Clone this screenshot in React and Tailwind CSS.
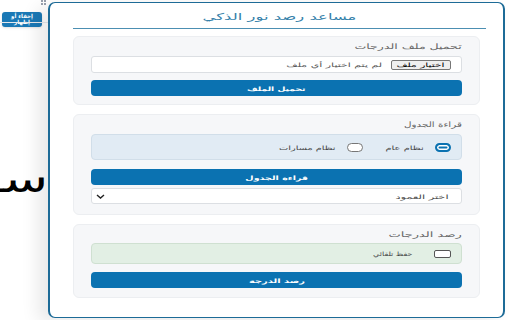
import React, { useLayoutEffect, useRef, useState } from "react";

const font = { fontFamily: '"DejaVu Sans", "Noto Sans", sans-serif' };

// the popup text is drawn wide; stretch each text so it fills its box
const Stretch = ({ className, children }) => {
  const boxRef = useRef(null);
  const textRef = useRef(null);
  const [scale, setScale] = useState(1);

  useLayoutEffect(() => {
    const box = boxRef.current.clientWidth;
    const text = textRef.current.offsetWidth;
    if (box && text) setScale(box / text);
  }, [children]);

  return (
    <span ref={boxRef} className={"inline-flex justify-center shrink-0 " + className}>
      <span
        ref={textRef}
        className="inline-block whitespace-nowrap"
        style={{ transform: `scaleX(${scale})` }}
      >
        {children}
      </span>
    </span>
  );
};

const Radio = ({ checked, onClick }) => (
  <span
    onClick={onClick}
    className={
      checked
        ? "w-[16px] h-[9px] shrink-0 rounded-full border-2 border-[#0b72b1] bg-[#0b72b1] shadow-[inset_0_0_0_1.5px_white] cursor-pointer"
        : "w-[16px] h-[9px] shrink-0 rounded-full border border-[#767676] bg-white cursor-pointer"
    }
  />
);

const App = () => {
  const [mode, setMode] = useState("general");
  const [autoSave, setAutoSave] = useState(false);

  return (
    <div className="relative w-[512px] h-[320px] bg-white overflow-hidden" style={font}>
      {/* page behind the popup */}
      <div className="pt-[7px] pl-[2px]">
        <button className="w-[40px] h-[15px] rounded-[3px] bg-[#1a78b5] text-white text-[5.5px] leading-[6.5px] font-bold shadow-sm">
          إخفاء أو
          <br />
          إظهار
        </button>
      </div>
      <div className="absolute left-[41px] top-0 grid grid-cols-2 gap-[1px]">
        <span className="w-[2px] h-[2px] bg-gray-400" />
        <span className="w-[2px] h-[2px] bg-gray-400" />
        <span className="w-[2px] h-[2px] bg-gray-400" />
        <span className="w-[2px] h-[2px] bg-gray-400" />
      </div>
      <div className="absolute left-0 top-[22px] w-[48px] border-t border-gray-200" />
      <div dir="rtl" className="absolute left-0 top-[160px] w-[48px] overflow-hidden">
        <p className="text-[38px] leading-none text-black whitespace-nowrap origin-right scale-x-[1.4]">ســـــــ</p>
      </div>

      {/* popup */}
      <div
        dir="rtl"
        className="absolute left-[48px] top-[2px] w-[457px] h-[316px] bg-white border-x-2 border-y border-[#1d6b97] rounded-[7px] shadow-[-10px_4px_18px_rgba(0,0,0,0.09)]"
      >
        <div className="mr-[17px] ml-[23px] h-[26px] pt-[3px] border-b-[1.5px] border-[#4c8fb2] flex items-center justify-center">
          <Stretch className="w-[154px] text-[9.5px] text-[#3581aa]">مساعد رصد نور الذكي</Stretch>
        </div>

        <div className="mx-[23px] mt-[7px] flex flex-col">
          {/* upload */}
          <section className="h-[69px] bg-[#f6f7f9] border border-[#eceef1] rounded-[6px] px-[17px] pt-[3px]">
            <div className="h-[14px] flex items-center">
              <Stretch className="w-[107px] text-[7.5px] text-[#666]">تحميل ملف الدرجات</Stretch>
            </div>
            <div className="mt-[2px] h-[17px] bg-white border border-[#dcdfe3] rounded-[3px] flex items-center pr-[10px] gap-[9px]">
              <span className="w-[60px] h-[10px] shrink-0 bg-[#efefef] border border-[#767676] rounded-[2px] flex items-center justify-center">
                <Stretch className="w-[48px] text-[6px] text-black">اختيار ملف</Stretch>
              </span>
              <Stretch className="w-[95px] text-[6px] text-[#555]">لم يتم اختيار أي ملف</Stretch>
            </div>
            <button className="mt-[7px] w-full h-[16px] bg-[#0b72b1] rounded-[4px] text-white text-[6px] font-bold flex items-center justify-center">
              <Stretch className="w-[58px]">تحميل الملف</Stretch>
            </button>
          </section>

          {/* read table */}
          <section className="mt-[9px] h-[101px] bg-[#f6f7f9] border border-[#eceef1] rounded-[6px] px-[17px] pt-[3px]">
            <div className="h-[14px] flex items-center">
              <Stretch className="w-[58px] text-[7.5px] text-[#666]">قراءة الجدول</Stretch>
            </div>
            <div className="mt-[2px] h-[26px] bg-[#e1ebf4] border border-[#d1dee9] rounded-[4px] flex items-center pr-[10px]">
              <Radio checked={mode === "general"} onClick={() => setMode("general")} />
              <Stretch className="mr-[11px] w-[38px] text-[6px] text-[#444]">نظام عام</Stretch>
              <span className="mr-[23px]" />
              <Radio checked={mode === "tracks"} onClick={() => setMode("tracks")} />
              <Stretch className="mr-[11px] w-[57px] text-[6px] text-[#444]">نظام مسارات</Stretch>
            </div>
            <button className="mt-[9px] w-full h-[16px] bg-[#0b72b1] rounded-[4px] text-white text-[6px] font-bold flex items-center justify-center">
              <Stretch className="w-[62px]">قراءة الجدول</Stretch>
            </button>
            <div className="mt-[3px] h-[16px] bg-white border border-[#dcdfe3] rounded-[3px] flex items-center justify-between pr-[12px] pl-[4px]">
              <Stretch className="w-[53px] text-[6px] text-[#444]">اختر العمود</Stretch>
              <svg width="9" height="5" viewBox="0 0 9 5">
                <path d="M1 1 L4.5 4 L8 1" fill="none" stroke="#222" strokeWidth="1.4" />
              </svg>
            </div>
          </section>

          {/* record */}
          <section className="mt-[9px] h-[74px] bg-[#f6f7f9] border border-[#eceef1] rounded-[6px] px-[17px] pt-[3px]">
            <div className="h-[14px] flex items-center">
              <Stretch className="w-[73px] text-[7.5px] text-[#666]">رصد الدرجات</Stretch>
            </div>
            <div className="mt-[1px] h-[21px] bg-[#e2efe4] border border-[#cfe0d1] rounded-[4px] flex items-center pr-[10px]">
              <span
                onClick={() => setAutoSave(!autoSave)}
                className={
                  autoSave
                    ? "w-[17px] h-[8px] shrink-0 rounded-[2px] border border-[#0b72b1] bg-[#0b72b1] cursor-pointer"
                    : "w-[17px] h-[8px] shrink-0 rounded-[2px] border border-[#555] bg-white cursor-pointer"
                }
              />
              <Stretch className="mr-[21px] w-[40px] text-[6px] text-[#444]">حفظ تلقائي</Stretch>
            </div>
            <button className="mt-[8px] w-full h-[16px] bg-[#0b72b1] rounded-[4px] text-white text-[6px] font-bold flex items-center justify-center">
              <Stretch className="w-[56px]">رصد الدرجة</Stretch>
            </button>
          </section>
        </div>
      </div>
    </div>
  );
};

export default App;
